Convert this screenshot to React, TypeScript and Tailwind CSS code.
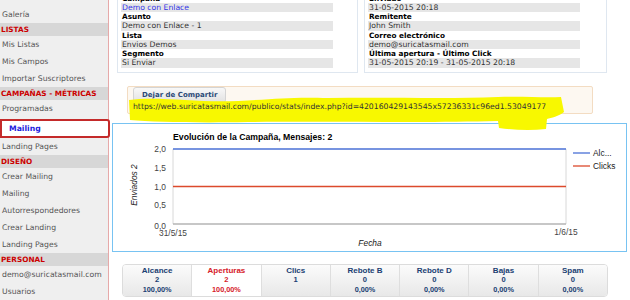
import React from "react"

interface MenuItem {
  title: string
  header?: boolean
  active?: boolean
}

const menu: MenuItem[] = [
  { title: "Galería" },
  { title: "LISTAS", header: true },
  { title: "Mis Listas" },
  { title: "Mis Campos" },
  { title: "Importar Suscriptores" },
  { title: "CAMPAÑAS - MÉTRICAS", header: true },
  { title: "Programadas" },
  { title: "Mailing", active: true },
  { title: "Landing Pages" },
  { title: "DISEÑO", header: true },
  { title: "Crear Mailing" },
  { title: "Mailing" },
  { title: "Autorrespondedores" },
  { title: "Crear Landing" },
  { title: "Landing Pages" },
  { title: "PERSONAL", header: true },
  { title: "demo@suricatasmail.com" },
  { title: "Usuarios" },
]

const leftFields = [
  { label: "Campaña", value: "Demo con Enlace", link: true },
  { label: "Asunto", value: "Demo con Enlace - 1" },
  { label: "Lista", value: "Envios Demos" },
  { label: "Segmento", value: "Si Enviar" },
]

const rightFields = [
  { label: "Enviado", value: "31-05-2015 20:18" },
  { label: "Remitente", value: "John Smith" },
  { label: "Correo electrónico", value: "demo@suricatasmail.com" },
  { label: "Última apertura - Último Click", value: "31-05-2015 20:19 - 31-05-2015 20:18" },
]

const stats = [
  { title: "Alcance", count: "2", pct: "100,00%" },
  { title: "Aperturas", count: "2", pct: "100,00%", active: true },
  { title: "Clics", count: "1", pct: "" },
  { title: "Rebote B", count: "0", pct: "0,00%" },
  { title: "Rebote D", count: "0", pct: "0,00%" },
  { title: "Bajas", count: "0", pct: "0,00%" },
  { title: "Spam", count: "0", pct: "0,00%" },
]

function Sidebar() {
  return (
    <aside className="w-[109px] shrink-0 border-r border-[#e6a9a9] bg-[#efefef] pt-[5.5px] text-[7.7px] text-[#555]">
      {menu.map((item, i) =>
        item.header ? (
          <div
            key={i}
            className="h-[13px] bg-[#d7d7d7] pl-px text-[7.3px] font-bold leading-[13px] text-[#cc0000]"
          >
            {item.title}
          </div>
        ) : item.active ? (
          <div
            key={i}
            className="relative z-10 mt-[2px] -mr-[2px] h-[19px] rounded-r-[3px] border-2 border-[#c42a2a] bg-white pl-[7px] font-bold leading-[15px] text-[#2020dd]"
          >
            {item.title}
          </div>
        ) : (
          <div key={i} className="h-[17px] pl-[2px] leading-[17px]">
            {item.title}
          </div>
        ),
      )}
    </aside>
  )
}

function InfoPanel({
  fields,
  width,
}: {
  fields: { label: string; value: string; link?: boolean }[]
  width: string
}) {
  return (
    <div className={`${width} border border-[#dfe7f0] bg-white pl-[3px] pt-[3.5px] pb-[4.5px]`}>
      {fields.map((f) => (
        <div key={f.label}>
          <div className="h-[9px] pl-px text-[7.3px] font-bold leading-[9px] text-black">{f.label}</div>
          <div
            className={`h-[9.5px] w-[212px] bg-[#e6e6e6] pl-px leading-[9.5px] ${
              f.link ? "text-[#3535e6]" : "text-[#333]"
            }`}
          >
            {f.value}
          </div>
        </div>
      ))}
    </div>
  )
}

function ShareBox() {
  return (
    <div className="relative ml-[18px] mt-[13px] h-[28px] w-[466px] rounded-[2px] border border-[#f3dcc2] bg-[#fdf8f1] pl-[5px]">
      <svg
        className="pointer-events-none absolute left-0 top-0 z-20 overflow-visible"
        width="466"
        height="28"
      >
        <path
          d="M1,13 C30,9 70,16 110,14 C150,12 160,10 200,11 C260,10 320,12 370,10 C395,9 415,11 433,10 L436,25 C431,29 423,31 419,32 L418,42 C402,44 386,43 371,41 L370,34 C300,36 200,34 120,35 C70,36 25,35 2,33 Z"
          fill="#f8f800"
        />
      </svg>
      <button className="relative z-10 mt-0 h-[16px] rounded-[3px] border border-[#d4d4d4] bg-gradient-to-b from-[#f8f8f8] to-[#e2e2e2] px-[8px] text-[7px] font-bold leading-[14px] text-[#2b4a78]">
        Dejar de Compartir
      </button>
      <div className="relative z-30 -mt-[1px] text-[7.7px] leading-[9px] text-[#333]">
        https://web.suricatasmail.com/publico/stats/index.php?id=420160429143545x57236331c96ed1.53049177
      </div>
    </div>
  )
}

function Chart() {
  const ticks = [
    { v: "2,0", y: 25 },
    { v: "1,5", y: 43.75 },
    { v: "1,0", y: 62.5 },
    { v: "0,5", y: 81.25 },
    { v: "0,0", y: 101.5 },
  ]
  return (
    <div className="ml-[3px] mt-[9px] h-[129px] w-[515px] border border-[#78c3f2] bg-white">
      <svg width="513" height="127" fontFamily="'Liberation Sans', Arial, sans-serif">
        <text x="60" y="16" fontSize="8.7" fontWeight="bold" fill="#000">
          Evolución de la Campaña, Mensajes: 2
        </text>
        <line x1="60" y1="25" x2="60" y2="100" stroke="#d8d8d8" strokeWidth="1" />
        <line x1="453" y1="25" x2="453" y2="100" stroke="#d8d8d8" strokeWidth="1" />
        <line x1="60" y1="100" x2="453" y2="100" stroke="#b4b4b4" strokeWidth="1.5" />
        <line x1="60" y1="25" x2="453" y2="25" stroke="#4a70d6" strokeWidth="1.3" />
        <line x1="60" y1="62.5" x2="453" y2="62.5" stroke="#dc4a2c" strokeWidth="1.3" />
        {ticks.map((t) => (
          <text key={t.v} x="53" y={t.y + 3} fontSize="8.4" fill="#444" textAnchor="end">
            {t.v}
          </text>
        ))}
        <text x="60" y="112" fontSize="8.4" fill="#444" textAnchor="middle">
          31/5/15
        </text>
        <text x="453" y="111" fontSize="8.4" fill="#444" textAnchor="middle">
          1/6/15
        </text>
        <text x="257" y="122" fontSize="8.4" fill="#222" fontStyle="italic" textAnchor="middle">
          Fecha
        </text>
        <text
          x="0"
          y="0"
          fontSize="8.4"
          fill="#222"
          fontStyle="italic"
          textAnchor="middle"
          transform="translate(24 61) rotate(-90)"
        >
          Enviados 2
        </text>
        <line x1="460" y1="29" x2="477" y2="29" stroke="#4a70d6" strokeWidth="1.3" />
        <text x="480" y="32" fontSize="8.4" fill="#222">
          Alc...
        </text>
        <line x1="460" y1="42" x2="477" y2="42" stroke="#dc4a2c" strokeWidth="1.3" />
        <text x="480" y="45" fontSize="8.4" fill="#222">
          Clicks
        </text>
      </svg>
    </div>
  )
}

function StatsTabs() {
  return (
    <div className="ml-[13px] mt-[12px] flex h-[33px] w-[486px] overflow-hidden rounded-[4px] border border-[#dcdcdc] font-['Liberation_Sans',Arial,sans-serif] font-bold">
      {stats.map((s, i) => (
        <div
          key={s.title}
          className={`flex flex-1 flex-col items-center pt-[0.5px] leading-[9.5px] ${
            i > 0 ? "border-l border-[#dedede]" : ""
          } ${
            s.active
              ? "bg-white text-[#d6202a]"
              : "bg-gradient-to-b from-[#fbfbfb] to-[#e8e8e8] text-[#203e72]"
          }`}
        >
          <span className="text-[8px]">{s.title}</span>
          <span className="text-[7.6px]">{s.count}</span>
          <span className="text-[7.3px]">{s.pct}</span>
        </div>
      ))}
    </div>
  )
}

export default function App() {
  return (
    <div className="flex h-[300px] w-[630px] overflow-hidden bg-white font-['DejaVu_Sans',Verdana,sans-serif]">
      <Sidebar />
      <main className="flex-1 text-[7.7px]">
        <div className="-mt-[11px] flex gap-[6px] pl-[8px]">
          <InfoPanel fields={leftFields} width="w-[241px]" />
          <InfoPanel fields={rightFields} width="w-[243px]" />
        </div>
        <ShareBox />
        <Chart />
        <StatsTabs />
      </main>
    </div>
  )
}
